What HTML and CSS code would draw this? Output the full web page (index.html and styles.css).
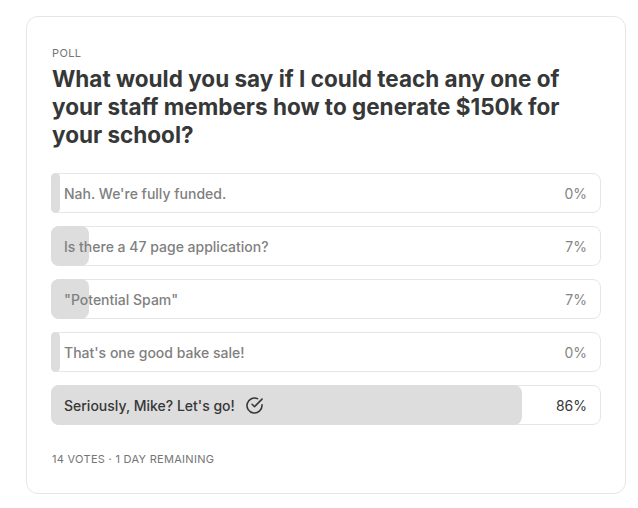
FILE: index.html
```html
<!DOCTYPE html>
<html>
<head>
<meta charset="utf-8">
<link rel="stylesheet" href="styles.css">
</head>
<body>
<div class="card">
  <div class="label">POLL</div>
  <h1 class="title">What would you say if I could teach any one of your staff members how to generate $150k for your school?</h1>
  <div class="options">
    <div class="option">
      <div class="fill fill-min"></div>
      <div class="content"><span class="text">Nah. We're fully funded.</span><span class="pct">0%</span></div>
    </div>
    <div class="option">
      <div class="fill" style="width:7%"></div>
      <div class="content"><span class="text">Is there a 47 page application?</span><span class="pct">7%</span></div>
    </div>
    <div class="option">
      <div class="fill" style="width:7%"></div>
      <div class="content"><span class="text">"Potential Spam"</span><span class="pct">7%</span></div>
    </div>
    <div class="option">
      <div class="fill fill-min"></div>
      <div class="content"><span class="text">That's one good bake sale!</span><span class="pct">0%</span></div>
    </div>
    <div class="option selected">
      <div class="fill" style="width:86%"></div>
      <div class="content"><span class="text">Seriously, Mike? Let's go!
        <svg class="check" viewBox="0 0 24 24" width="19" height="19" fill="none" stroke="currentColor" stroke-width="2" stroke-linecap="round" stroke-linejoin="round"><path d="M21.5 11.08V12a9.5 9.5 0 1 1-5.63-8.68"/><polyline points="21.5 4 12 13.5 9 10.5"/></svg></span><span class="pct">86%</span></div>
    </div>
  </div>
  <div class="footer">14 VOTES · 1 DAY REMAINING</div>
</div>
</body>
</html>
```
FILE: styles.css
```css
* { box-sizing: border-box; }
html, body { margin: 0; padding: 0; background: #ffffff; }
body {
  font-family: Inter, "Noto Sans", "Liberation Sans", sans-serif;
  color: #363737;
  padding: 16px 12px 0 26px;
}
.card {
  width: 600px;
  height: 478px;
  border: 1px solid #e6e6e6;
  border-radius: 12px;
  padding: 28px 24px 24px 24px;
}
.label {
  font-size: 11px;
  line-height: 16px;
  letter-spacing: 0.4px;
  color: #757575;
  margin-left: 1px;
}
.title {
  margin: 4px 0 0 1px;
  font-size: 22.5px;
  line-height: 28px;
  font-weight: 700;
  color: #363737;
  letter-spacing: 0;
}
.options {
  margin-top: 24px;
  display: flex;
  flex-direction: column;
  gap: 13px;
}
.option {
  position: relative;
  height: 40px;
  border: 1px solid #e6e6e6;
  border-radius: 8px;
}
.fill {
  position: absolute;
  left: -1px;
  top: -1px;
  bottom: -1px;
  background: #dddddd;
  border-radius: 8px;
}
.fill-min { width: 9px; }
.content {
  position: relative;
  height: 100%;
  display: flex;
  align-items: center;
  justify-content: space-between;
  padding: 0 13px 0 12px;
  font-size: 14px;
  font-weight: 500;
  color: #808080;
}
.text { display: flex; align-items: center; gap: 10px; }
.pct { font-weight: 400; font-size: 14px; color: #858585; }
.selected .content { color: #363737; }
.selected .pct { color: #363737; }
.check { color: #363737; }
.footer {
  margin-top: 26px;
  font-size: 11px;
  line-height: 16px;
  letter-spacing: 0.3px;
  color: #757575;
  margin-left: 1px;
}
```
